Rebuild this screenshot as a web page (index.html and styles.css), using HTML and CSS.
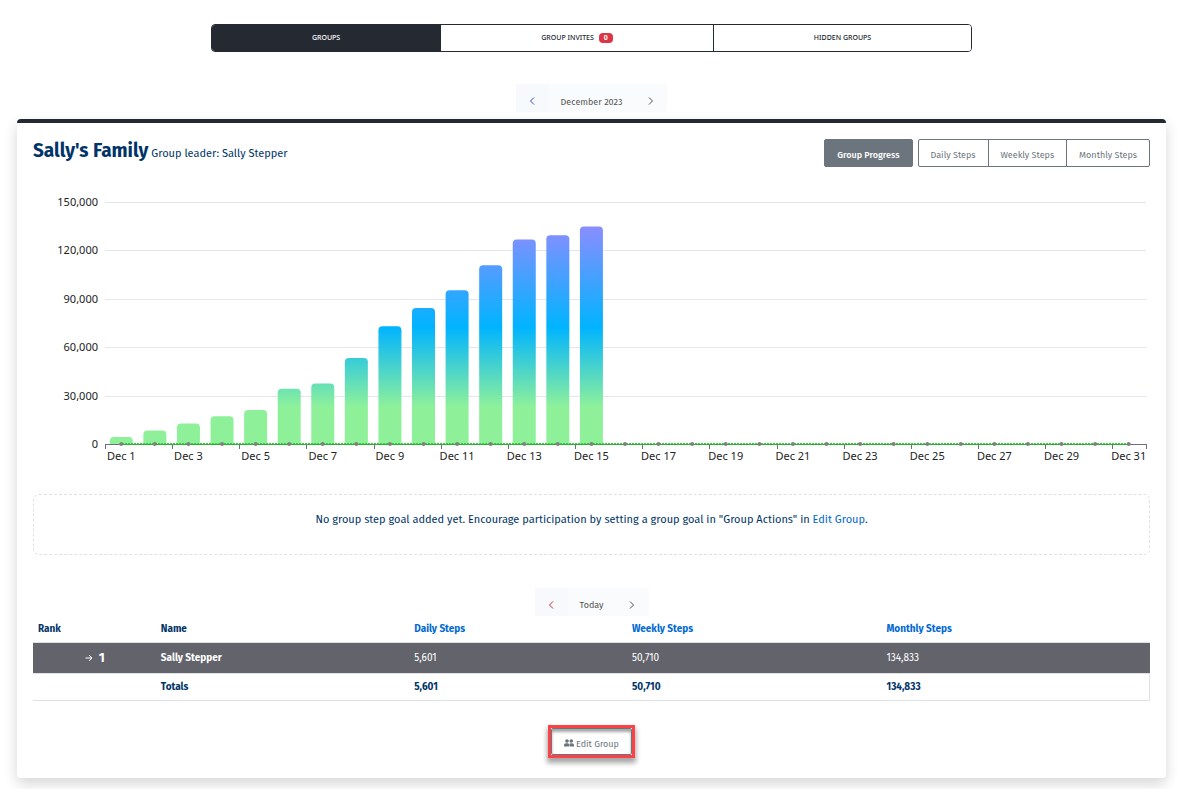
FILE: index.html
```html
<!DOCTYPE html>
<html lang="en">
<head>
<meta charset="utf-8">
<title>Groups</title>
<link rel="stylesheet" href="styles.css">
</head>
<body>
<nav class="tabs" aria-label="Group sections">
  <button class="tab tab-groups active" type="button">GROUPS</button>
  <button class="tab tab-invites" type="button">GROUP INVITES <span class="badge">0</span></button>
  <button class="tab tab-hidden" type="button">HIDDEN GROUPS</button>
</nav>

<div class="pager month-pager">
  <button class="pager-btn prev blue" type="button" aria-label="Previous month"><svg class="chevron" viewBox="0 0 8 8"><path d="M6 0.5 2.5 4 6 7.5"/></svg></button>
  <span class="pager-label">December 2023</span>
  <button class="pager-btn" type="button" aria-label="Next month"><svg class="chevron" viewBox="0 0 8 8"><path d="M2 0.5 5.5 4 2 7.5"/></svg></button>
</div>

<main class="card">
  <header class="card-head">
    <div class="heading"><h1>Sally's Family</h1><span class="leader">Group leader: Sally Stepper</span></div>
    <div class="views">
      <button class="btn filled" type="button">Group Progress</button>
      <div class="btn-group">
        <button class="btn" type="button">Daily Steps</button>
        <button class="btn" type="button">Weekly Steps</button>
        <button class="btn" type="button">Monthly Steps</button>
      </div>
    </div>
  </header>

  <svg class="chart" id="chart" viewBox="0 0 1117 280" role="img" aria-label="Cumulative group steps by day">
    <defs>
      <linearGradient id="steps" gradientUnits="userSpaceOnUse" x1="0" y1="41" x2="0" y2="222">
        <stop offset="0" stop-color="#8b8dff"/>
        <stop offset="0.56" stop-color="#00b4ff"/>
        <stop offset="1" stop-color="#8ef19a"/>
      </linearGradient>
    </defs>
  </svg>

  <p class="goal">No group step goal added yet. Encourage participation by setting a group goal in "Group Actions" in <a href="#edit">Edit Group</a>.</p>

  <div class="pager day-pager">
    <button class="pager-btn prev red" type="button" aria-label="Previous day"><svg class="chevron" viewBox="0 0 8 8"><path d="M6 0.5 2.5 4 6 7.5"/></svg></button>
    <span class="pager-label">Today</span>
    <button class="pager-btn" type="button" aria-label="Next day"><svg class="chevron" viewBox="0 0 8 8"><path d="M2 0.5 5.5 4 2 7.5"/></svg></button>
  </div>

  <table class="ranking">
    <colgroup><col class="c-rank"><col class="c-name"><col class="c-day"><col class="c-week"><col class="c-month"></colgroup>
    <thead>
      <tr><th>Rank</th><th>Name</th><th><a href="#daily">Daily Steps</a></th><th><a href="#weekly">Weekly Steps</a></th><th><a href="#monthly">Monthly Steps</a></th></tr>
    </thead>
    <tbody>
      <tr class="me"><td class="rank"><svg class="arrow" viewBox="0 0 8 8"><path d="M0.5 4H7M4 1l3 3-3 3"/></svg><span>1</span></td><td><strong>Sally Stepper</strong></td><td>5,601</td><td>50,710</td><td>134,833</td></tr>
    </tbody>
    <tfoot>
      <tr><td></td><td>Totals</td><td>5,601</td><td>50,710</td><td>134,833</td></tr>
    </tfoot>
  </table>

  <div class="actions" id="edit">
    <div class="highlight"><button class="btn edit" type="button"><svg class="people" viewBox="0 0 10 8"><circle cx="3" cy="2" r="1.8"/><circle cx="7.3" cy="2" r="1.8"/><path d="M0 7.5V6q0-1.7 2-1.7h1.6q1 0 1.4.8v2.4zM5.5 7.5V5.1q.5-.8 1.3-.8h1q2.2 0 2.2 1.7v1.5z"/></svg>Edit Group</button></div>
  </div>
</main>
<script src="chart.js"></script>
</body>
</html>
```
FILE: styles.css
```css
* { box-sizing: border-box; }
body {
  margin: 0;
  padding: 24px 28px 11px 17px;
  background: #fff;
  color: #003468;
  font: 11px/16px "Fira Sans", "Noto Sans", sans-serif;
}
button { font: inherit; color: inherit; cursor: pointer; }
a { color: #0069d2; text-decoration: none; }

.tabs {
  display: flex;
  max-width: 761px;
  height: 28px;
  margin: 0 auto 32px;
  border: 1px solid #242932;
  border-radius: 4px;
  overflow: hidden;
}
.tab {
  display: flex;
  align-items: center;
  justify-content: center;
  gap: 5px;
  padding: 0;
  border: 0;
  background: #fff;
  color: #242932;
  font-family: "Noto Sans", sans-serif;
  font-size: 7px;
  font-weight: 500;
}
.tab + .tab { border-left: 1px solid #242932; }
.tab-groups { flex: 229 1 0; }
.tab-invites { flex: 273 1 0; }
.tab-hidden { flex: 258 1 0; }
.tab.active { background: #242932; color: #fff; }
.badge {
  padding: 0 5px;
  border-radius: 4px;
  background: #dc3545;
  color: #fff;
  font-size: 7px;
  font-weight: 700;
  line-height: 10px;
}

.pager {
  display: flex;
  width: fit-content;
  height: 28px;
  margin: 0 auto;
  border-radius: 2px;
  background: #fafbfd;
  color: #555;
  font-size: 9px;
}
.pager-btn {
  display: flex;
  align-items: center;
  justify-content: center;
  width: 33px;
  padding: 5px 0 0;
  border: 0;
  background: transparent;
}
.pager-btn.prev { background: #f8f9fc; }
.pager-label { padding: 10px 12px 0; }
.day-pager .pager-label { padding-top: 9px; }
.blue { color: #2b50c8; }
.red { color: #c0322b; }
.chevron { width: 8px; height: 8px; fill: none; stroke: currentColor; }

.card {
  margin-top: 7px;
  padding: 16px;
  border-top: 4px solid #242932;
  border-radius: 4px;
  background: #fff;
  box-shadow: 0 6px 14px rgba(0, 0, 0, 0.16);
}
.card-head { display: flex; justify-content: space-between; height: 28px; }
.heading { display: flex; align-items: baseline; gap: 3px; }
h1 { margin: 0; font-size: 19px; line-height: 24px; font-weight: 700; }
.views { display: flex; gap: 5px; }
.btn-group { display: flex; }
.btn {
  height: 28px;
  padding: 4px 12px 0;
  border: 1px solid #6c757d;
  border-radius: 2px;
  background: #fff;
  color: #6c757d;
  font-size: 9px;
  white-space: nowrap;
}
.btn.filled { background: #6c757d; color: #fff; font-weight: 500; }
.btn-group .btn { border-radius: 0; }
.btn-group .btn + .btn { margin-left: -1px; }
.btn-group .btn:first-child { border-radius: 2px 0 0 2px; }
.btn-group .btn:last-child { border-radius: 0 2px 2px 0; }

.chart { display: block; width: 100%; margin: 18px 0 29px; overflow: visible; }
.grid-line { stroke: #e3e6f1; }
.axis-line { stroke: #6e7079; fill: none; }
.axis-text { fill: #222; font-family: "Noto Sans", sans-serif; font-size: 11px; }
.y-text { text-anchor: end; }
.x-text { text-anchor: middle; }
.bar { fill: url(#steps); }
.goal-line { stroke: #2fae36; }
.goal-dots { stroke: #3ccc44; stroke-dasharray: 2 1; }
.grid-line, .axis-line, .goal-line, .goal-dots { shape-rendering: crispEdges; }
.dot { fill: #808080; }

.goal {
  min-height: 61px;
  margin: 0 0 33px;
  padding: 17px 16px;
  border: 1px dashed #dee2e6;
  border-radius: 6px;
  text-align: center;
}

.ranking { width: 100%; border-collapse: collapse; table-layout: fixed; text-align: left; }
.c-rank { width: 11%; }
.c-name { width: 22.7%; }
.c-day { width: 19.5%; }
.c-week { width: 22.8%; }
.c-month { width: 24%; }
.ranking th, .ranking td { padding: 5px; }
.ranking th { height: 26px; font-size: 10px; }
.ranking td { height: 31px; font-size: 10px; }
.me { border-top: 1px solid #dee2e6; background: #62636b; color: #fff; }
.rank { text-align: right; }
.rank span { margin: 0 46px 0 6px; font-size: 13px; font-weight: 700; }
.arrow { width: 8px; height: 8px; fill: none; stroke: currentColor; }
.ranking tfoot td { height: 27px; font-weight: 700; }
.ranking tfoot tr { border: 1px solid #dee2e6; border-left: 0; }

.actions { display: flex; justify-content: center; padding: 24px 0 4px; }
.highlight {
  display: flex;
  border: 3px solid #fb4245;
  box-shadow: 0 4px 5px 1px rgba(0, 0, 0, 0.35);
}
.edit {
  height: 27px;
  box-shadow: inset 0 3px 3px rgba(0, 0, 0, 0.35);
}
.people { width: 10px; height: 8px; margin-right: 2px; fill: currentColor; }
```
FILE: chart.js
```javascript
const chart = document.getElementById("chart");
const left = 72, right = 1113, base = 259, top150 = 17;
const step = (right - left) / 31;
const totals = [4300, 8400, 12700, 17200, 21000, 34200, 37500, 53300, 73000, 84300, 95300, 110800, 126700, 129400, 134833];

function add(tag, attrs, text) {
  const el = document.createElementNS("http://www.w3.org/2000/svg", tag);
  for (const key in attrs) el.setAttribute(key, attrs[key]);
  if (text) el.textContent = text;
  chart.appendChild(el);
}

for (let v = 0; v <= 150000; v += 30000) {
  const y = Math.round(base - (base - top150) * v / 150000) + 0.5;
  if (v) add("line", { class: "grid-line", x1: left, x2: right, y1: y, y2: y });
  add("text", { class: "axis-text y-text", x: left - 7, y: y + 3.5 }, v.toLocaleString("en-US"));
}

totals.forEach((total, i) => {
  const x = left + step * (i + 0.5) - 12;
  const y = base - (base - top150) * total / 150000;
  add("path", { class: "bar", d: `M${x} ${base}V${y + 4}q0-4 4-4h15q4 0 4 4V${base}z` });
});

add("line", { class: "axis-line", x1: left, x2: right, y1: base + 0.5, y2: base + 0.5 });
for (let i = 0; i <= 32; i += 2) {
  const x = Math.round(left + step * Math.min(i, 31)) + 0.5;
  add("line", { class: "axis-line", x1: x, x2: x, y1: base, y2: base + 5 });
}
const first = left + step / 2, last = right - step / 2;
add("line", { class: "goal-line", x1: first, x2: last, y1: base + 0.5, y2: base + 0.5 });
add("line", { class: "goal-dots", x1: first, x2: last, y1: base - 0.5, y2: base - 0.5 });
for (let i = 0; i < 31; i++) {
  const x = left + step * (i + 0.5) - 0.5;
  add("circle", { class: "dot", cx: x, cy: base, r: 2 });
  if (i % 2 === 0) add("text", { class: "axis-text x-text", x, y: base + 16 }, `Dec ${i + 1}`);
}
```
